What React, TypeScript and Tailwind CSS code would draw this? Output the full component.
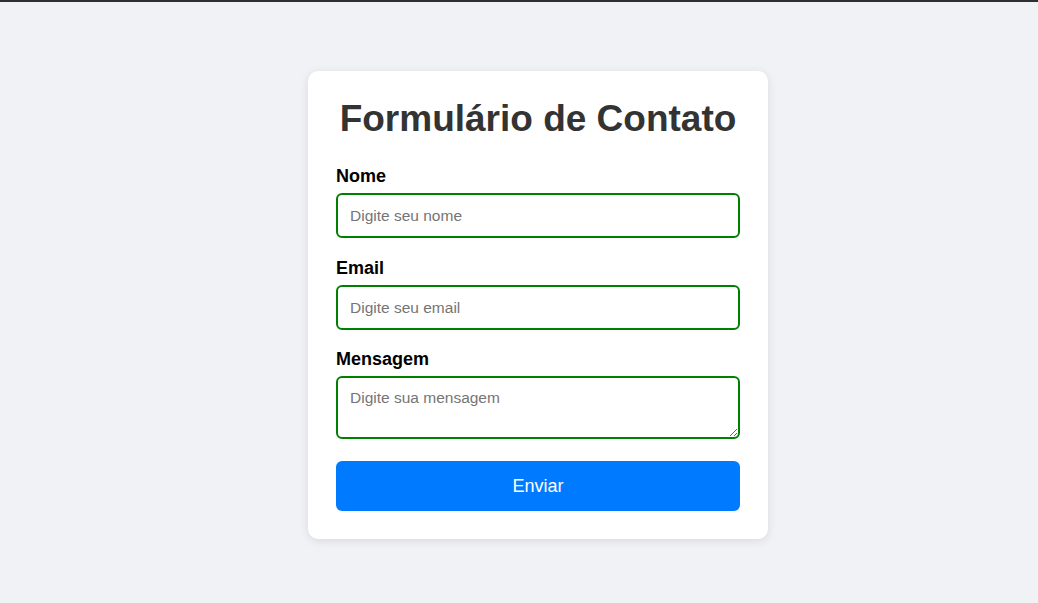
export default function App() {
  return (
    <div className="min-h-screen bg-[#f0f2f5] font-['Liberation_Sans',Arial,sans-serif]">
      <div className="h-[2px] bg-[#2f2f2f]" />
      <div className="flex justify-center pt-[69px] pl-[38px]">
        <form
          className="w-[460px] rounded-[10px] bg-white px-[28px] pt-[26px] pb-[28px] shadow-[0_2px_10px_rgba(0,0,0,0.1)]"
          onSubmit={(e) => e.preventDefault()}
        >
          <h1 className="mb-[25px] text-center text-[37px] leading-[44px] font-bold whitespace-nowrap text-[#333]">
            Formulário de Contato
          </h1>

          <label className="mb-[6px] block text-[18px] leading-[21px] font-bold text-black">Nome</label>
          <input
            type="text"
            placeholder="Digite seu nome"
            className="mb-[20px] block h-[45px] w-full rounded-[6px] border-2 border-[#008000] px-[12px] text-[15.5px] outline-none placeholder:text-[#757575]"
          />

          <label className="mb-[6px] block text-[18px] leading-[21px] font-bold text-black">Email</label>
          <input
            type="email"
            placeholder="Digite seu email"
            className="mb-[19px] block h-[45px] w-full rounded-[6px] border-2 border-[#008000] px-[12px] text-[15.5px] outline-none placeholder:text-[#757575]"
          />

          <label className="mb-[6px] block text-[18px] leading-[21px] font-bold text-black">Mensagem</label>
          <textarea
            placeholder="Digite sua mensagem"
            className="block h-[63px] w-full rounded-[6px] border-2 border-[#008000] px-[12px] py-[8px] text-[15.5px] outline-none placeholder:text-[#757575]"
          />

          <button
            type="submit"
            className="mt-[22px] block h-[50px] w-full rounded-[6px] bg-[#007bff] text-[18px] text-white"
          >
            Enviar
          </button>
        </form>
      </div>
    </div>
  );
}
